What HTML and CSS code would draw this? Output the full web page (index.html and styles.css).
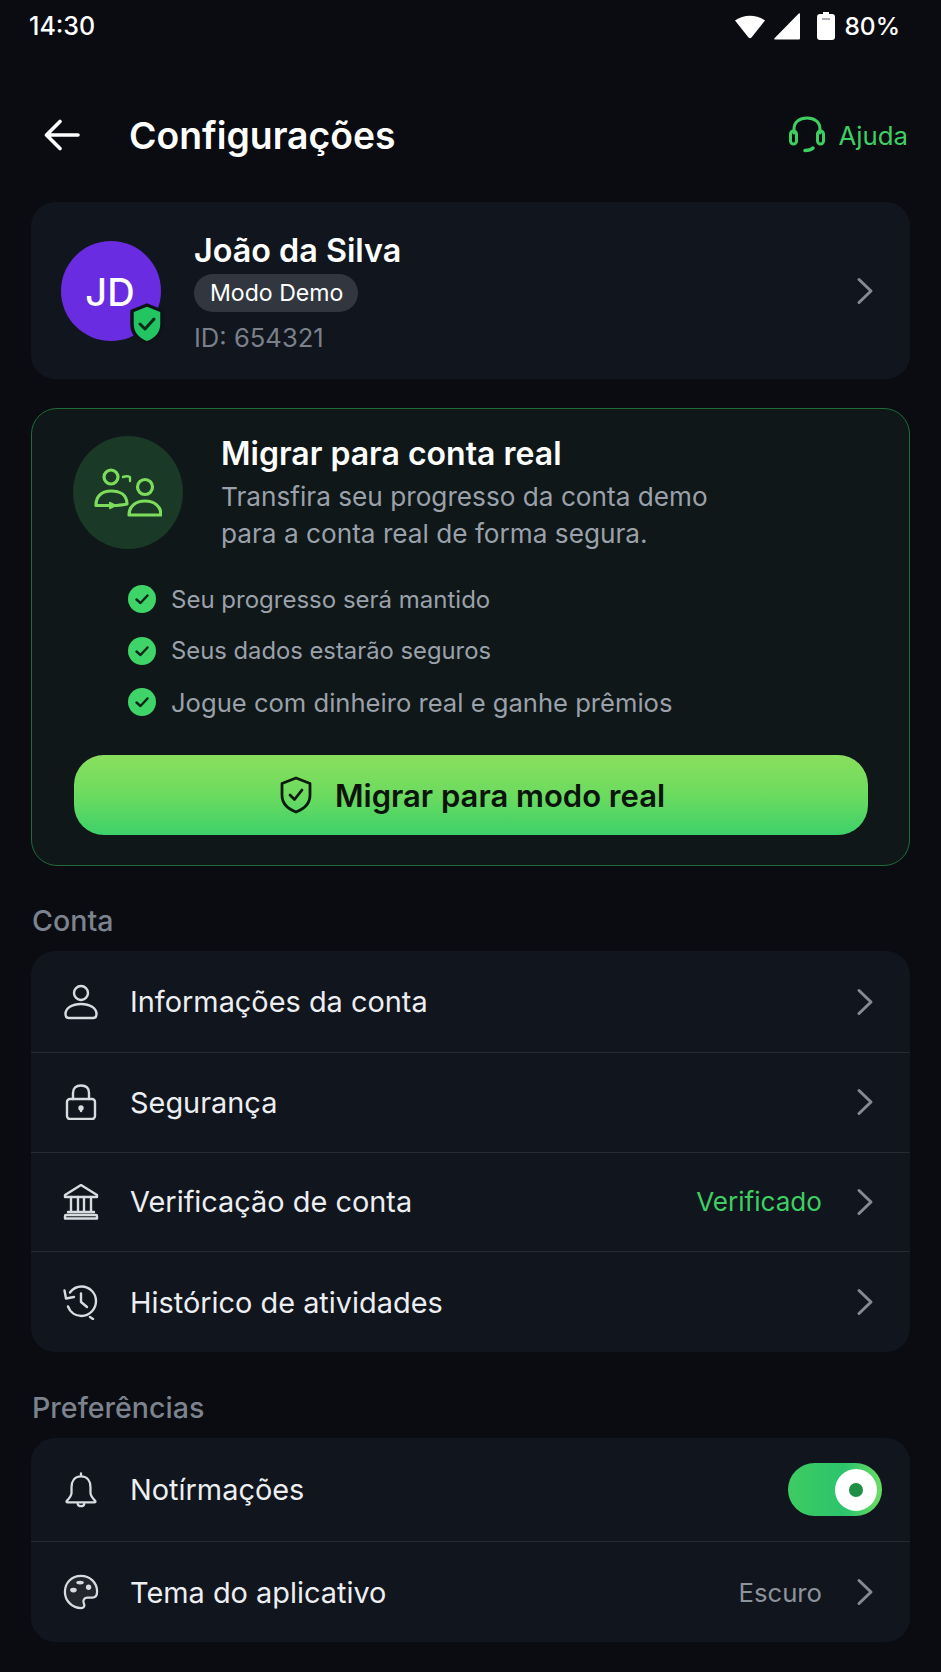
FILE: index.html
```html
<!DOCTYPE html>
<html lang="pt-BR">
  <head>
    <meta charset="utf-8" />
    <title>Configurações</title>
    <link rel="stylesheet" href="styles.css">
  </head>
  <body>
    <div class="status-bar">
      <span class="status-time">14:30</span>
      <div class="status-icons">
        <svg class="status-wifi" viewBox="0 0 32 26"><path d="M1 7.500C9.500 1 22.500 1 31 7.500L17.500 24.500Q16 26 14.500 24.500Z" fill="#fff"/></svg>
        <svg class="status-cell" viewBox="0 0 28 27"><path d="M27 1V25.500Q27 26.500 26 26.500H2Q0.500 26.500 1.500 25.200L25.500 0.800Q27 -0.200 27 1Z" fill="#fff"/></svg>
        <svg class="status-batt" viewBox="0 0 18 28"><path d="M6 0H12V2H15Q18 2 18 5V25Q18 28 15 28H3Q0 28 0 25V5Q0 2 3 2H6Z" fill="#fff"/><rect x="5" y="6" width="8" height="2" fill="#aab"/></svg>
        <span class="status-pct">80%</span>
      </div>
    </div>

    <header class="top-bar">
      <svg class="back-icon" viewBox="0 0 36 32" fill="none" stroke="#fff" stroke-width="3.600" stroke-linecap="round" stroke-linejoin="round"><path d="M34 16H3M16 2.500L2.500 16L16 29.500"/></svg>
      <h1 class="page-title">Configurações</h1>
      <div class="help">
        <svg class="help-icon" viewBox="0 0 36 38" fill="none" stroke="#3ecf63" stroke-width="3" stroke-linecap="round"><path d="M5 17V13C5 6 10.500 2 18 2S31 6 31 13V17"/><rect x="1.500" y="15" width="6" height="13" rx="3"/><rect x="28.500" y="15" width="6" height="13" rx="3"/><path d="M24 32C22 34 20 34.500 16 34.500" stroke-width="3.500"/></svg>
        <span>Ajuda</span>
      </div>
    </header>

    <main class="content">
      <section class="card profile">
        <div class="avatar">
          JD
          <svg class="avatar-badge" viewBox="0 0 36 42"><path d="M18 2L33 8V21C33 31 26 37 18 40C10 37 3 31 3 21V8Z" fill="#23c462" stroke="#0f1319" stroke-width="3.500" stroke-linejoin="round"/><path d="M11 21L16 26L25 16" fill="none" stroke="#0e2a1a" stroke-width="3" stroke-linecap="round" stroke-linejoin="round"/></svg>
        </div>
        <div class="profile-info">
          <div class="profile-name">João da Silva</div>
          <div class="profile-badge">Modo Demo</div>
          <div class="profile-id">ID: 654321</div>
        </div>
        <svg class="chevron chevron-big" viewBox="0 0 18 28"><path d="M3 2.500L15 14L3 25.500"/></svg>
      </section>

      <section class="migrate">
        <div class="migrate-top">
          <div class="migrate-circle">
            <svg viewBox="0 0 68 50" fill="none" stroke="#7ddc5c" stroke-width="3.200" stroke-linejoin="round" stroke-linecap="round"><circle cx="17" cy="9" r="7"/><path d="M2 37C2 28 8 23 17 23S33 27 33 36Q25 37.500 20 37.500H2Z"/><circle cx="51" cy="19" r="7.500"/><path d="M35 47C35 38 42 33 51 33S67 38 67 47Z"/><path d="M29 9C32 8 34 8 36 9V13" stroke-width="2.400"/><path d="M16 35L21 37.500L16 40" stroke-width="2.400"/></svg>
          </div>
          <div class="migrate-text">
            <h2 class="migrate-title">Migrar para conta real</h2>
            <p class="migrate-desc">Transfira seu progresso da conta demo<br>para a conta real de forma segura.</p>
          </div>
        </div>
        <ul class="benefits">
          <li class="benefit"><svg class="benefit-check" viewBox="0 0 28 28"><circle cx="14" cy="14" r="14" fill="#3fd468"/><path d="M8.500 14.500L12.500 18L19.500 10.500" fill="none" stroke="#10261a" stroke-width="2.400" stroke-linecap="round" stroke-linejoin="round"/></svg>Seu progresso será mantido</li>
          <li class="benefit benefit-short"><svg class="benefit-check" viewBox="0 0 28 28"><circle cx="14" cy="14" r="14" fill="#3fd468"/><path d="M8.500 14.500L12.500 18L19.500 10.500" fill="none" stroke="#10261a" stroke-width="2.400" stroke-linecap="round" stroke-linejoin="round"/></svg>Seus dados estarão seguros</li>
          <li class="benefit benefit-long"><svg class="benefit-check" viewBox="0 0 28 28"><circle cx="14" cy="14" r="14" fill="#3fd468"/><path d="M8.500 14.500L12.500 18L19.500 10.500" fill="none" stroke="#10261a" stroke-width="2.400" stroke-linecap="round" stroke-linejoin="round"/></svg>Jogue com dinheiro real e ganhe prêmios</li>
        </ul>
        <button class="migrate-btn">
          <svg class="migrate-btn-icon" viewBox="0 0 32 38" fill="none" stroke="#0c1a10" stroke-width="2.800" stroke-linecap="round" stroke-linejoin="round"><path d="M16 2L30 7.500V19C30 28 24 33 16 36C8 33 2 28 2 19V7.500Z"/><path d="M10 19L14.500 23.500L22 14"/></svg>
          Migrar para modo real
        </button>
      </section>

      <h3 class="section-label section-conta">Conta</h3>
      <section class="card list">
        <div class="row row-first">
          <svg class="row-icon" viewBox="0 0 36 36"><circle cx="18" cy="9" r="7"/><path d="M2.500 30C2.500 24 9 20 18 20S33.500 24 33.500 30C33.500 33 32 34 30 34H6C4 34 2.500 33 2.500 30Z"/></svg>
          <span class="row-label">Informações da conta</span>
          <svg class="chevron" viewBox="0 0 18 28"><path d="M3 2.500L15 14L3 25.500"/></svg>
        </div>
        <div class="row">
          <svg class="row-icon" viewBox="0 0 36 36"><path d="M10 15V9C10 4 13 1.500 18 1.500S26 4 26 9V15"/><rect x="4" y="15" width="28" height="20" rx="3"/><circle cx="18" cy="24" r="1.500" fill="#d8dbe0"/><path d="M18 24V27"/></svg>
          <span class="row-label">Segurança</span>
          <svg class="chevron" viewBox="0 0 18 28"><path d="M3 2.500L15 14L3 25.500"/></svg>
        </div>
        <div class="row">
          <svg class="row-icon" viewBox="0 0 36 36"><path d="M18 1L34 11V13H2V11Z"/><path d="M8 13V28M15 13V28M21 13V28M28 13V28M5 28H31M2 34.500V32Q2 31 3 31H33Q34 31 34 32V34.500Z"/></svg>
          <span class="row-label">Verificação de conta</span>
          <span class="row-value row-value-green">Verificado</span>
          <svg class="chevron" viewBox="0 0 18 28"><path d="M3 2.500L15 14L3 25.500"/></svg>
        </div>
        <div class="row row-last">
          <svg class="row-icon" viewBox="0 0 36 36"><path d="M7 8.500C10 4.500 14 2.500 18.500 2.500C26.500 2.500 33 9 33 17S26.500 32 18.500 32C12 32 7 28 5 22.500"/><path d="M1.500 6.500L3 14.500L11 13"/><path d="M18 9.500V18L24 23"/><path d="M27 33L30 35"/></svg>
          <span class="row-label">Histórico de atividades</span>
          <svg class="chevron" viewBox="0 0 18 28"><path d="M3 2.500L15 14L3 25.500"/></svg>
        </div>
      </section>

      <h3 class="section-label section-prefs">Preferências</h3>
      <section class="card list">
        <div class="row row-notif">
          <svg class="row-icon" viewBox="0 0 36 38"><path d="M18 1.500V4.500M18 4.500C25 4.500 28 10 28 16V22C28 25 30 27.500 33 30.500Q34 32 32 32H4Q2 32 3 30.500C6 27.500 8 25 8 22V16C8 10 11 4.500 18 4.500Z"/><path d="M14.500 33.500C15 37 21 37 21.500 33.500"/></svg>
          <span class="row-label">Notírmações</span>
          <div class="toggle"><span class="toggle-knob"></span></div>
        </div>
        <div class="row row-theme">
          <svg class="row-icon" viewBox="0 0 38 38"><path d="M19 2C9 2 2 9.500 2 19C2 28.500 10 36 19 36C22 36 23.500 33.500 22 31C20.500 28 22.500 25 26 25H31C34.500 25 36 22 36 18.500C36 9 28.500 2 19 2Z" fill="#23262c"/><ellipse cx="11" cy="17" rx="3.500" ry="2.500" fill="#d8dbe0" stroke="none"/><ellipse cx="18" cy="9" rx="4" ry="2" fill="#d8dbe0" stroke="none"/><circle cx="27" cy="14" r="2.800" fill="#d8dbe0" stroke="none"/></svg>
          <span class="row-label">Tema do aplicativo</span>
          <span class="row-value">Escuro</span>
          <svg class="chevron" viewBox="0 0 18 28"><path d="M3 2.500L15 14L3 25.500"/></svg>
        </div>
      </section>
    </main>
  </body>
</html>
```

FILE: styles.css
```css
* {
  box-sizing: border-box;
}
body {
  margin: 0;
  width: 941px;
  height: 1672px;
  overflow: hidden;
  background-color: #0a0c11;
  color: #fff;
  font-family: Inter, "Liberation Sans", sans-serif;
}
h1, h2, h3, p, ul {
  margin: 0;
  padding: 0;
}

/* status bar */
.status-bar {
  display: flex;
  justify-content: space-between;
  align-items: center;
  height: 52px;
  padding: 0 41px 0 29px;
  font-size: 25px;
  font-weight: 500;
}
.status-icons {
  display: flex;
  align-items: center;
}
.status-wifi {
  width: 32px;
  height: 26px;
}
.status-cell {
  width: 28px;
  height: 27px;
  margin-left: 7px;
}
.status-batt {
  width: 18px;
  height: 28px;
  margin-left: 16px;
}
.status-pct {
  margin-left: 9px;
  font-size: 24.500px;
}

/* header */
.top-bar {
  display: flex;
  align-items: center;
  height: 66px;
  margin-top: 50px;
  padding: 0 33px 0 44px;
}
.back-icon {
  width: 36px;
  height: 32px;
}
.page-title {
  flex: 1;
  margin-left: 49px;
  font-size: 37.300px;
  font-weight: 600;
}
.help {
  display: flex;
  align-items: center;
  gap: 13px;
  font-size: 25.800px;
  font-weight: 400;
  color: #3ecf63;
}
.help-icon {
  width: 36px;
  height: 38px;
}

/* cards */
.content {
  padding: 34px 31px 0;
}
.card {
  background-color: #11151d;
  border-radius: 24px;
}
.profile {
  display: flex;
  align-items: center;
  height: 177px;
  padding: 0 36px 0 30px;
}
.avatar {
  position: relative;
  display: flex;
  align-items: center;
  justify-content: center;
  width: 100px;
  height: 100px;
  padding: 3px 2px 0 0;
  border-radius: 50%;
  background-color: #6a2ce0;
  font-size: 38px;
  font-weight: 500;
}
.avatar-badge {
  position: absolute;
  right: -4px;
  bottom: -4px;
  width: 36px;
  height: 42px;
}
.profile-info {
  flex: 1;
  margin: 7px 0 0 33px;
}
.profile-name {
  font-size: 32.300px;
  font-weight: 600;
  line-height: 38px;
}
.profile-badge {
  display: inline-block;
  height: 38px;
  margin-top: 4px;
  padding: 0 15px 0 16px;
  border-radius: 19px;
  background-color: #32373f;
  font-size: 23.100px;
  font-weight: 400;
  line-height: 38px;
}
.profile-id {
  margin-top: 8px;
  font-size: 25.600px;
  line-height: 36px;
  color: #7b808a;
}
.chevron {
  flex: none;
  width: 18px;
  height: 28px;
  fill: none;
  stroke: #858a94;
  stroke-width: 3;
  stroke-linecap: round;
  stroke-linejoin: round;
}

/* migrate card */
.migrate {
  height: 458px;
  margin-top: 29px;
  padding: 27px 41px 0;
  border: 1px solid #1f6b39;
  border-radius: 26px;
  background-color: #0f1719;
}
.migrate-top {
  display: flex;
}
.migrate-circle {
  display: flex;
  align-items: center;
  justify-content: center;
  flex: none;
  width: 110px;
  height: 113px;
  border-radius: 50%;
  background-color: #1a3a27;
}
.migrate-circle svg {
  width: 68px;
  height: 50px;
}
.migrate-text {
  margin-left: 38px;
}
.migrate-title {
  font-size: 32px;
  font-weight: 600;
  line-height: 36px;
}
.migrate-desc {
  margin-top: 6px;
  font-size: 26.200px;
  line-height: 37px;
  color: #9ba1aa;
}
.benefits {
  margin-top: 21.500px;
  padding-left: 55px;
  list-style: none;
}
.benefit {
  display: flex;
  align-items: center;
  gap: 15px;
  height: 51.500px;
  font-size: 24px;
  color: #9ba1aa;
}
.benefit-short {
  font-size: 23.800px;
}
.benefit-long {
  font-size: 25.600px;
}
.benefit-check {
  flex: none;
  width: 28px;
  height: 28px;
}
.migrate-btn {
  display: flex;
  align-items: center;
  justify-content: center;
  gap: 23px;
  width: 794px;
  height: 80px;
  margin: 27px 0 0 1px;
  padding: 0 0 0 3px;
  border: none;
  border-radius: 30px;
  background: linear-gradient(to bottom, #8adf5d, #6cdb5f 50%, #3dd16a);
  color: #0b130d;
  font-family: inherit;
  font-size: 31px;
  font-weight: 600;
}
.migrate-btn-icon {
  width: 32px;
  height: 38px;
}

/* lists */
.section-label {
  font-size: 28.600px;
  font-weight: 500;
  color: #7d838e;
}
.section-conta {
  margin: 33px 0 0 1px;
  line-height: 44px;
  height: 52px;
}
.section-prefs {
  margin: 34px 0 0 1px;
  line-height: 44px;
  height: 52px;
}
.row {
  display: flex;
  align-items: center;
  height: 99.500px;
  padding: 0 36px 0 32px;
  border-bottom: 1px solid #262a31;
}
.row-first {
  height: 102px;
}
.row-last {
  height: 100px;
  border-bottom: none;
}
.row-notif {
  height: 104px;
  padding-right: 28px;
}
.row-theme {
  height: 100px;
  border-bottom: none;
}
.row-icon {
  flex: none;
  width: 36px;
  height: 36px;
  fill: none;
  stroke: #d8dbe0;
  stroke-width: 2.400;
  stroke-linecap: round;
  stroke-linejoin: round;
}
.row-label {
  flex: 1;
  margin-left: 31px;
  font-size: 28.900px;
  color: #eceef1;
}
.row-value {
  margin-right: 34px;
  font-size: 25.700px;
  color: #8d929b;
}
.row-value-green {
  color: #3ecf63;
  font-size: 26.100px;
  font-weight: 400;
}
.toggle {
  display: flex;
  align-items: center;
  justify-content: flex-end;
  width: 94px;
  height: 53px;
  padding-right: 5px;
  border-radius: 27px;
  background: linear-gradient(to right, #3ecb62, #2cc46c 60%, #6bdc63);
}
.toggle-knob {
  width: 42px;
  height: 42px;
  border: 14px solid #fff;
  border-radius: 50%;
  background-color: #1f8f45;
}
```
